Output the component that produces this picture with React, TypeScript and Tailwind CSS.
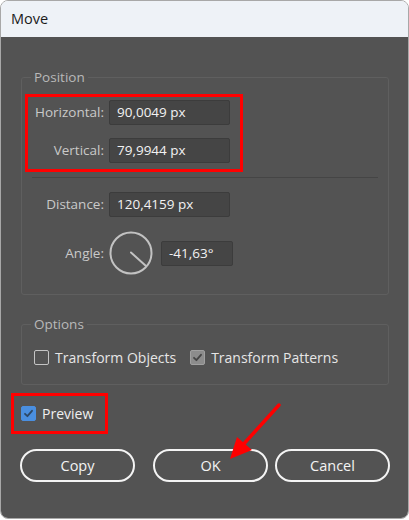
import React from 'react';

const font = { fontFamily: '"Open Sans", "Noto Sans", sans-serif' };

const Field = ({ value, className = 'w-[121px]' }: { value: string; className?: string }) => (
  <div
    className={`${className} h-[25px] flex items-center px-[7px] bg-[#454545] border border-[#3c3c3c] rounded-[2px] text-[13.5px] text-[#f2f2f2]`}
  >
    {value}
  </div>
);

const Row = ({ label, value, className = '' }: { label: string; value: string; className?: string }) => (
  <div className={`flex items-center gap-[5px] ${className}`}>
    <span className="w-[76px] text-right text-[13.5px] text-[#c9c9c9]">{label}</span>
    <Field value={value} />
  </div>
);

const Check = ({ variant }: { variant: 'off' | 'gray' | 'blue' }) => {
  if (variant === 'off') {
    return <span className="w-[15px] h-[15px] rounded-[2px] border-[1.5px] border-[#c4c4c4]" />;
  }
  const box = variant === 'blue' ? 'bg-[#4a8fe0] border-[#4a8fe0]' : 'bg-[#8c8c8c] border-[#a0a0a0]';
  const tick = variant === 'blue' ? '#2d4866' : '#454545';
  return (
    <span className={`w-[15px] h-[15px] rounded-[2px] border flex items-center justify-center ${box}`}>
      <svg width="11" height="11" viewBox="0 0 11 11">
        <path d="M2 5.8 L4.4 8.2 L9 2.8" fill="none" stroke={tick} strokeWidth="1.8" strokeLinecap="round" strokeLinejoin="round" />
      </svg>
    </span>
  );
};

const Button = ({ label, className = '' }: { label: string; className?: string }) => (
  <button
    className={`w-[115px] h-[33px] rounded-full border-2 border-[#f4f4f4] text-[14.5px] text-[#f4f4f4] flex items-center justify-center ${className}`}
  >
    {label}
  </button>
);

export default function App() {
  return (
    <div className="w-[409px] h-[520px] bg-white" style={font}>
      <div className="relative w-[409px] h-[519px] rounded-[8px] border border-[#a8a8a8] overflow-hidden flex flex-col">
        {/* Title bar */}
        <div className="h-[36px] shrink-0 bg-[#eef2f7] flex items-center pl-[10px] text-[14.5px] text-[#1b1b1b]">
          Move
        </div>

        {/* Body */}
        <div className="flex-1 bg-[#535353] flex flex-col pt-[31px]">
          <fieldset className="ml-[20px] w-[368px] border border-[#5f5f5f] rounded-[3px] pb-[19px]">
            <legend className="ml-[9px] px-[3px] h-[18px] leading-[18px] text-[13.5px] text-[#b9b9b9]">Position</legend>

            <div className="mt-[8px] ml-[3px] w-[218px] border-[3px] border-[#ff0000] pt-[3px] pb-[6px] flex flex-col gap-[13px]">
              <Row label="Horizontal:" value="90,0049 px" />
              <Row label="Vertical:" value="79,9944 px" />
            </div>

            <div className="mt-[5px] mx-[10px] h-px bg-[#454545]" />

            <div className="pl-[6px] mt-[14px] flex flex-col gap-[14px]">
              <Row label="Distance:" value="120,4159 px" />
              <div className="flex items-center gap-[5px]">
                <span className="w-[76px] text-right text-[13.5px] text-[#c9c9c9]">Angle:</span>
                <svg width="44" height="44" viewBox="0 0 44 44" className="shrink-0">
                  <circle cx="22" cy="22" r="20.5" fill="none" stroke="#c2c2c2" strokeWidth="2" />
                  <line x1="22" y1="21.5" x2="37" y2="35" stroke="#c2c2c2" strokeWidth="2" strokeLinecap="round" />
                </svg>
                <Field value="-41,63°" className="w-[72px] ml-[3px]" />
              </div>
            </div>
          </fieldset>

          <fieldset className="mt-[20px] ml-[20px] w-[368px] border border-[#5f5f5f] rounded-[3px] pb-[16px]">
            <legend className="ml-[9px] px-[3px] h-[18px] leading-[18px] text-[13.5px] text-[#b9b9b9]">Options</legend>
            <div className="mt-[14px] pl-[12px] flex items-center text-[14px] text-[#e6e6e6]">
              <Check variant="off" />
              <span className="ml-[6px]">Transform Objects</span>
              <span className="ml-[14px] flex items-center">
                <Check variant="gray" />
              </span>
              <span className="ml-[6px]">Transform Patterns</span>
            </div>
          </fieldset>

          <div className="mt-[8px] ml-[10px] w-[97px] h-[41px] border-[3px] border-[#ff0000] flex items-center pl-[7px] gap-[6px] text-[14px] text-[#f0f0f0]">
            <Check variant="blue" />
            <span>Preview</span>
          </div>

          <div className="mt-[15px] ml-[19px] flex items-center">
            <Button label="Copy" />
            <Button label="OK" className="ml-[18px] border-[2.5px]" />
            <Button label="Cancel" className="ml-[7px]" />
          </div>
        </div>

        {/* Red annotation arrow */}
        <svg className="absolute left-0 top-0 pointer-events-none" width="409" height="519" viewBox="0 0 409 519">
          <line x1="278" y1="404" x2="240" y2="446" stroke="#ff0000" strokeWidth="3.5" strokeLinecap="round" />
          <polygon points="229,458 236,436 251,449" fill="#ff0000" />
        </svg>
      </div>
    </div>
  );
}
